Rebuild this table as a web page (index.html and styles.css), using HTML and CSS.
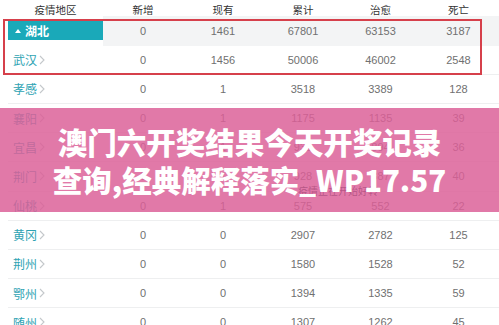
FILE: index.html
```html
<!DOCTYPE html>
<html lang="zh">
<head>
<meta charset="utf-8">
<link rel="stylesheet" href="styles.css">
</head>
<body>
<div class="page">
  <div class="table">
    <div class="row head">
      <div class="c name-h">疫情地区</div><div class="c">新增</div><div class="c">现有</div><div class="c">累计</div><div class="c">治愈</div><div class="c">死亡</div>
    </div>
    <div class="row prov">
      <div class="c name"><span class="pill"><span class="tri"></span>湖北</span></div><div class="c">0</div><div class="c">1461</div><div class="c">67801</div><div class="c">63153</div><div class="c">3187</div>
    </div>
    <div class="row"><div class="c name">武汉<svg class="chev" viewBox="0 0 6 10"><path d="M1 1l4 4-4 4"/></svg></div><div class="c">0</div><div class="c">1456</div><div class="c">50006</div><div class="c">46002</div><div class="c">2548</div></div>
    <div class="row"><div class="c name">孝感<svg class="chev" viewBox="0 0 6 10"><path d="M1 1l4 4-4 4"/></svg></div><div class="c">0</div><div class="c">1</div><div class="c">3518</div><div class="c">3389</div><div class="c">128</div></div>
    <div class="row"><div class="c name">襄阳<svg class="chev" viewBox="0 0 6 10"><path d="M1 1l4 4-4 4"/></svg></div><div class="c">0</div><div class="c">1</div><div class="c">1175</div><div class="c">1135</div><div class="c">39</div></div>
    <div class="row"><div class="c name">宜昌<svg class="chev" viewBox="0 0 6 10"><path d="M1 1l4 4-4 4"/></svg></div><div class="c">0</div><div class="c">1</div><div class="c">931</div><div class="c">894</div><div class="c">36</div></div>
    <div class="row"><div class="c name">荆门<svg class="chev" viewBox="0 0 6 10"><path d="M1 1l4 4-4 4"/></svg></div><div class="c">0</div><div class="c">1</div><div class="c">928</div><div class="c">887</div><div class="c">40</div></div>
    <div class="row"><div class="c name">仙桃<svg class="chev" viewBox="0 0 6 10"><path d="M1 1l4 4-4 4"/></svg></div><div class="c">0</div><div class="c">1</div><div class="c">575</div><div class="c">552</div><div class="c">22</div></div>
    <div class="row"><div class="c name">黄冈<svg class="chev" viewBox="0 0 6 10"><path d="M1 1l4 4-4 4"/></svg></div><div class="c">0</div><div class="c">0</div><div class="c">2907</div><div class="c">2782</div><div class="c">125</div></div>
    <div class="row"><div class="c name">荆州<svg class="chev" viewBox="0 0 6 10"><path d="M1 1l4 4-4 4"/></svg></div><div class="c">0</div><div class="c">0</div><div class="c">1580</div><div class="c">1528</div><div class="c">52</div></div>
    <div class="row"><div class="c name">鄂州<svg class="chev" viewBox="0 0 6 10"><path d="M1 1l4 4-4 4"/></svg></div><div class="c">0</div><div class="c">0</div><div class="c">1394</div><div class="c">1335</div><div class="c">59</div></div>
    <div class="row"><div class="c name">随州<svg class="chev" viewBox="0 0 6 10"><path d="M1 1l4 4-4 4"/></svg></div><div class="c">0</div><div class="c">0</div><div class="c">1307</div><div class="c">1262</div><div class="c">45</div></div>
  </div>
  <div class="redbox"></div>
  <div class="banner">
    <div class="faint">疫情正在开始好转</div>
    <div class="title">澳门六开奖结果今天开奖记录</div>
    <div class="title">查询,经典解释落实_WP17.57</div>
  </div>
</div>
</body>
</html>
```

FILE: styles.css
```css
html, body {
  margin: 0;
  padding: 0;
  background: #fff;
  overflow: hidden;
}
.page {
  position: relative;
  width: 499px;
  height: 325px;
  overflow: hidden;
  font-family: "Liberation Sans", "Noto Sans CJK SC", sans-serif;
}
.table {
  margin-left: 8px;
  width: 491px;
}
.row {
  display: grid;
  grid-template-columns: 95px 80px 80px 80px 75px 81px;
  height: 29.2px;
  align-items: stretch;
  border-bottom: 1px solid #eeeff0;
  box-sizing: border-box;
}
.row.head {
  height: 16.4px;
  border-bottom: none;
}
.c {
  display: flex;
  align-items: center;
  justify-content: center;
  font-size: 11px;
  color: #707070;
}
.head .c {
  color: #333;
  font-family: "Noto Sans CJK SC", sans-serif;
  font-size: 10.5px;
  padding-top: 2px;
}
.head .name-h {
  justify-content: center;
}
.name {
  justify-content: flex-start;
  padding-left: 5px;
  font-family: "Noto Sans CJK SC", sans-serif;
  font-size: 12px;
  color: #2ea3b3;
  gap: 2px;
}
.chev {
  width: 6px;
  height: 10px;
  fill: none;
  stroke: #c4c8cb;
  stroke-width: 1.1;
}
.prov {
  border-bottom: none;
}
.prov .c:not(.name) {
  background: #f3f4f5;
}
.prov .name {
  padding-left: 0;
}
.pill {
  display: flex;
  align-items: center;
  width: 95px;
  height: 19px;
  background: #1aa9b9;
  color: #fff;
  font-weight: 700;
  font-size: 12px;
  padding-left: 7px;
  box-sizing: border-box;
  gap: 4px;
}
.tri {
  width: 0;
  height: 0;
  border-left: 3px solid transparent;
  border-right: 3px solid transparent;
  border-bottom: 4px solid #fff;
}
.redbox {
  position: absolute;
  left: 3px;
  top: 19px;
  width: 479px;
  height: 56px;
  border: 2px solid #d6404b;
  box-sizing: border-box;
}
.banner {
  position: absolute;
  left: 0;
  top: 108px;
  width: 499px;
  height: 104px;
  background: rgba(219, 95, 151, 0.84);
  display: flex;
  flex-direction: column;
  align-items: center;
  justify-content: center;
}
.title {
  font-family: "Noto Sans CJK SC", sans-serif;
  font-weight: 900;
  font-size: 29.5px;
  line-height: 38px;
  color: #fff;
  white-space: nowrap;
  position: relative;
}
.faint {
  position: absolute;
  left: 298px;
  top: 75px;
  font-family: "Noto Sans CJK SC", sans-serif;
  font-size: 10px;
  color: rgba(130, 40, 90, 0.45);
}
```
